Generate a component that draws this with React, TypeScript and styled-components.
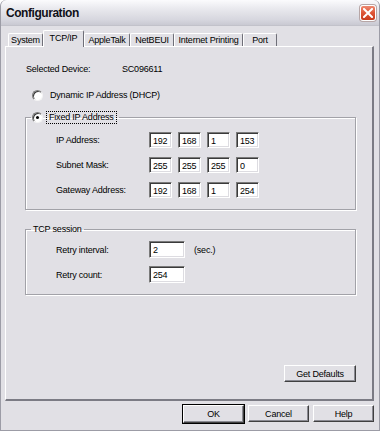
import styled, { createGlobalStyle } from 'styled-components';

const GlobalStyle = createGlobalStyle`
    body {
        margin: 0;
        background: #ffffff;
        font-family: "Liberation Sans", Arial, sans-serif;
    }
`;

const tabs = [
    { label: 'System', width: 35 },
    { label: 'TCP/IP', width: 41, active: true },
    { label: 'AppleTalk', width: 46 },
    { label: 'NetBEUI', width: 44 },
    { label: 'Internet Printing', width: 69 },
    { label: 'Port', width: 34 },
];

const ipRows = [
    { label: 'IP Address:', values: ['192', '168', '1', '153'] },
    { label: 'Subnet Mask:', values: ['255', '255', '255', '0'] },
    { label: 'Gateway Address:', values: ['192', '168', '1', '254'] },
];

export default function App() {
    return (
        <>
            <GlobalStyle />
            <Window>
                <TitleBar>
                    <Title>Configuration</Title>
                    <CloseButton aria-label="Close">
                        <svg width="10" height="10" viewBox="0 0 10 10">
                            <path d="M1 1 L9 9 M9 1 L1 9" stroke="#fff" strokeWidth="2" strokeLinecap="square" />
                        </svg>
                    </CloseButton>
                </TitleBar>
                <Body>
                    <TabStrip>
                        {tabs.map((t) => (
                            <Tab key={t.label} $width={t.width} $active={!!t.active}>
                                {t.label}
                            </Tab>
                        ))}
                    </TabStrip>
                    <Panel>
                        <InfoRow>
                            <InfoLabel>Selected Device:</InfoLabel>
                            <span>SC096611</span>
                        </InfoRow>
                        <RadioRow>
                            <Radio />
                            <RadioText>Dynamic IP Address (DHCP)</RadioText>
                        </RadioRow>

                        <GroupBox>
                            <Legend $offset={5}>
                                <Radio $checked />
                                <RadioText $focused>Fixed IP Address</RadioText>
                            </Legend>
                            <GroupContent $top={8} $bottom={11} $gap={9}>
                                {ipRows.map((row) => (
                                    <FieldRow key={row.label}>
                                        <FieldLabel>{row.label}</FieldLabel>
                                        <IpFields>
                                            {row.values.map((v, i) => (
                                                <TextBox key={i} $width={23} $height={16} readOnly value={v} />
                                            ))}
                                        </IpFields>
                                    </FieldRow>
                                ))}
                            </GroupContent>
                        </GroupBox>

                        <GroupBox $spaced>
                            <Legend $offset={5}>
                                <LegendText>TCP session</LegendText>
                            </Legend>
                            <GroupContent $top={6} $bottom={11} $gap={8}>
                                <FieldRow>
                                    <FieldLabel>Retry interval:</FieldLabel>
                                    <TextBox $width={36} $height={17} readOnly value="2" />
                                    <Unit>(sec.)</Unit>
                                </FieldRow>
                                <FieldRow>
                                    <FieldLabel>Retry count:</FieldLabel>
                                    <TextBox $width={36} $height={17} readOnly value="254" />
                                </FieldRow>
                            </GroupContent>
                        </GroupBox>

                        <PanelActions>
                            <PushButton $width={72}>Get Defaults</PushButton>
                        </PanelActions>
                    </Panel>
                    <Footer>
                        <PushButton $width={61} $default>OK</PushButton>
                        <PushButton $width={61}>Cancel</PushButton>
                        <PushButton $width={61}>Help</PushButton>
                    </Footer>
                </Body>
            </Window>
        </>
    );
}

const Window = styled.div`
    width: 380px;
    height: 431px;
    box-sizing: border-box;
    background: #e1e0e5;
    border: 1px solid #9c9ca6;
    border-top: none;
    border-radius: 6px 6px 0 0;
    display: flex;
    flex-direction: column;
    font-size: 9px;
    letter-spacing: -0.2px;
    color: #000;
    overflow: hidden;
`;

const TitleBar = styled.div`
    height: 25px;
    flex: none;
    display: flex;
    align-items: center;
    justify-content: space-between;
    padding: 0 3px 0 5px;
    background: linear-gradient(to bottom, #fbfbfd 0%, #e9e9ee 35%, #d6d6de 80%, #c9c9d2 100%);
    border-bottom: 1px solid #c2c2ca;
    border-radius: 6px 6px 0 0;
`;

const Title = styled.span`
    font-size: 12px;
    font-weight: bold;
    letter-spacing: -0.45px;
    color: #101018;
`;

const CloseButton = styled.div`
    width: 14px;
    height: 14px;
    border: 1px solid #ffffff;
    border-radius: 3px;
    background: linear-gradient(to bottom, #ee8a72 0%, #dd5435 50%, #c93a1c 100%);
    box-shadow: 0 0 0 1px #b7a6a6;
    display: flex;
    align-items: center;
    justify-content: center;
`;

const Body = styled.div`
    flex: 1;
    display: flex;
    flex-direction: column;
    padding: 4px 5px 0 4px;
`;

const TabStrip = styled.div`
    height: 16px;
    display: flex;
    align-items: flex-end;
    padding-left: 3px;
`;

const Tab = styled.div<{ $width: number; $active: boolean }>`
    width: ${(p) => p.$width}px;
    height: ${(p) => (p.$active ? 17 : 13)}px;
    box-sizing: border-box;
    display: flex;
    align-items: ${(p) => (p.$active ? 'flex-start' : 'center')};
    justify-content: center;
    padding-top: ${(p) => (p.$active ? 2 : 0)}px;
    background: #e1e0e5;
    border-top: 1px solid #ffffff;
    border-left: 1px solid #ffffff;
    border-right: 1px solid #6f6f78;
    border-radius: 2px 2px 0 0;
    white-space: nowrap;
    position: relative;
    z-index: ${(p) => (p.$active ? 2 : 0)};
    margin-bottom: ${(p) => (p.$active ? -1 : 0)}px;
`;

const Panel = styled.div`
    height: 355px;
    box-sizing: border-box;
    display: flex;
    flex-direction: column;
    padding: 16px 16px 17px 19px;
    border-top: 1px solid #ffffff;
    border-left: 1px solid #ffffff;
    border-right: 2px solid #7b7b84;
    border-bottom: 2px solid #7b7b84;
    position: relative;
    z-index: 1;
`;

const InfoRow = styled.div`
    display: flex;
    align-items: center;
    height: 11px;
    padding-left: 1px;
`;

const InfoLabel = styled.span`
    width: 96px;
`;

const RadioRow = styled.div`
    display: flex;
    align-items: center;
    height: 13px;
    margin-top: 15px;
    padding-left: 7px;
`;

const Radio = styled.span<{ $checked?: boolean }>`
    width: 11px;
    height: 11px;
    flex: none;
    box-sizing: border-box;
    border-radius: 50%;
    background: #ffffff;
    border: 1px solid;
    border-color: #7c7c7c #f4f4f4 #f4f4f4 #7c7c7c;
    box-shadow: inset 1px 1px 0 #3c3c3c;
    display: flex;
    align-items: center;
    justify-content: center;
    &::after {
        content: '';
        width: 3px;
        height: 3px;
        border-radius: 50%;
        background: ${(p) => (p.$checked ? '#000' : 'transparent')};
    }
`;

const RadioText = styled.span<{ $focused?: boolean }>`
    margin-left: ${(p) => (p.$focused ? 3 : 4)}px;
    padding: 0 2px;
    line-height: 11px;
    border: 1px dotted ${(p) => (p.$focused ? '#000' : 'transparent')};
`;

const GroupBox = styled.fieldset<{ $spaced?: boolean }>`
    margin: ${(p) => (p.$spaced ? 14 : 9)}px 0 0 0;
    padding: 0;
    min-width: 0;
    border: 1px solid #a2a2a8;
    box-shadow: 1px 1px 0 #ffffff, inset 1px 1px 0 #ffffff;
`;

const Legend = styled.legend<{ $offset: number }>`
    margin-left: ${(p) => p.$offset}px;
    padding: 0 2px 0 1px;
    display: flex;
    align-items: center;
`;

const LegendText = styled.span`
    line-height: 11px;
    padding-left: 1px;
`;

const GroupContent = styled.div<{ $top: number; $bottom: number; $gap: number }>`
    display: flex;
    flex-direction: column;
    gap: ${(p) => p.$gap}px;
    padding: ${(p) => p.$top}px 0 ${(p) => p.$bottom}px 30px;
`;

const FieldRow = styled.div`
    display: flex;
    align-items: center;
`;

const FieldLabel = styled.span`
    width: 93px;
    flex: none;
`;

const IpFields = styled.div`
    display: flex;
    gap: 6px;
`;

const TextBox = styled.input<{ $width: number; $height: number }>`
    width: ${(p) => p.$width}px;
    height: ${(p) => p.$height}px;
    box-sizing: border-box;
    margin: 0;
    padding: 1px 0 0 3px;
    font-family: "Liberation Sans", Arial, sans-serif;
    font-size: 9px;
    letter-spacing: -0.2px;
    color: #000;
    background: #ffffff;
    border: 1px solid;
    border-color: #7a7a7a #ffffff #ffffff #7a7a7a;
    box-shadow: inset 1px 1px 0 #3a3a3a, inset -1px -1px 0 #dddce1;
    outline: none;
`;

const Unit = styled.span`
    margin-left: 9px;
`;

const PanelActions = styled.div`
    margin-top: auto;
    display: flex;
    justify-content: flex-end;
`;

const PushButton = styled.button<{ $width: number; $default?: boolean }>`
    width: ${(p) => p.$width}px;
    height: ${(p) => (p.$default ? 18 : 17)}px;
    box-sizing: border-box;
    margin: 0;
    padding: 0;
    font-family: "Liberation Sans", Arial, sans-serif;
    font-size: 9px;
    letter-spacing: -0.2px;
    color: #000;
    background: #e1e0e5;
    border: 1px solid;
    border-color: #ffffff #404040 #404040 #ffffff;
    box-shadow: inset -1px -1px 0 #8a8a92;
    outline: ${(p) => (p.$default ? '1px solid #000' : 'none')};
    outline-offset: 0;
`;

const Footer = styled.div`
    display: flex;
    justify-content: flex-end;
    gap: 4px;
    margin-top: 4px;
    padding-right: 0;
`;
